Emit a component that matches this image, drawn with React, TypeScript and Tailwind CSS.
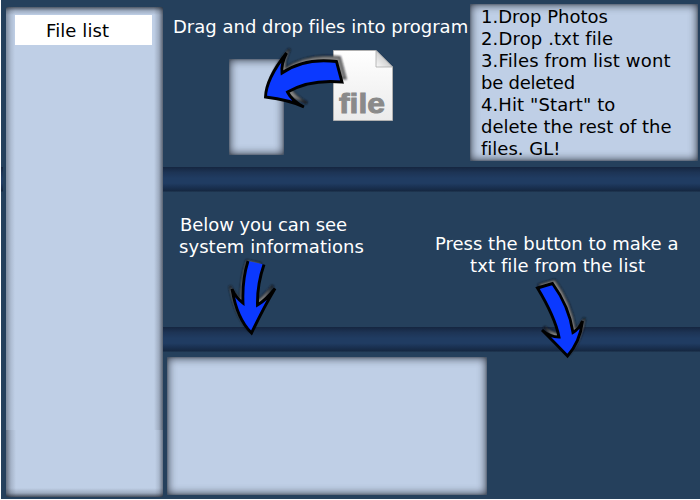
import type { ReactNode } from "react";

function Panel({ className, children }: { className: string; children?: ReactNode }) {
  return (
    <div
      className={`shrink-0 rounded-[2px] bg-[#bfcfe6] shadow-[inset_0_0_9px_1px_rgba(10,15,25,0.75),inset_0_0_2px_rgba(10,15,25,0.5)] ${className}`}
    >
      {children}
    </div>
  );
}

function Band({ className = "" }: { className?: string }) {
  return (
    <div
      className={`h-[25px] shrink-0 bg-[linear-gradient(to_bottom,#152640_0%,#1d3455_22%,#203c62_45%,#203c62_65%,#1a3152_80%,#152842_95%,#233b55_100%)] ${className}`}
    />
  );
}

type ArrowProps = { d: string; outline?: string; shadow?: string; dx: number; dy: number };

function Arrow({ d, outline = d, shadow = d, dx, dy }: ArrowProps) {
  return (
    <g strokeLinejoin="miter" strokeMiterlimit="5">
      <g transform={`translate(${dx} ${dy})`} filter="url(#soft)">
        <path d={shadow} fill="#6b6b6b" stroke="#0a0d12" strokeWidth="2.6" />
        <path d={shadow} fill="#858585" />
      </g>
      <path d={d} fill="#0b39ff" />
      <path d={outline} fill="none" stroke="#000" strokeWidth="2.9" />
    </g>
  );
}

export default function App() {
  return (
    <div
      className="relative h-[500px] w-[700px] overflow-hidden bg-white pb-px pl-px text-[18px] leading-[22px] whitespace-nowrap [font-variant-ligatures:none]"
      style={{ fontFamily: '"DejaVu Sans", Verdana, sans-serif' }}
    >
      <div className="flex h-full bg-[#25405c]">
        <div className="flex w-[2px] shrink-0 flex-col pt-[167px]">
          <Band />
        </div>
        <div className="w-[160px] shrink-0 pt-[7px] pl-[3px]">
          <div className="h-[423px] w-[157px] rounded-t-[2px] bg-[#bfcfe6] bg-[linear-gradient(to_right,rgba(20,25,35,0.35),rgba(20,25,35,0.1)_5px,transparent_9px),linear-gradient(to_left,rgba(20,25,35,0.6),rgba(20,25,35,0.2)_4px,transparent_9px),linear-gradient(to_bottom,rgba(20,25,35,0.65),rgba(20,25,35,0.18)_4px,transparent_8px)] pt-[8px] pl-[9px]">
            <div className="h-[30px] w-[137px] bg-white pt-[5px] pl-[31px] text-black">
              <span className="tracking-[0.1px]">File list</span>
            </div>
          </div>
          <div className="h-[67px] w-[157px] rounded-b-[2px] bg-[#bfcfe6] bg-[linear-gradient(to_right,rgba(20,25,35,0.5),rgba(20,25,35,0.15)_5px,transparent_10px),linear-gradient(to_left,rgba(20,25,35,0.5),rgba(20,25,35,0.12)_4px,transparent_8px),linear-gradient(to_top,rgba(20,25,35,0.7),rgba(20,25,35,0.2)_4px,transparent_9px)]" />
        </div>
        <div className="flex flex-1 flex-col">
          <div className="flex h-[167px] shrink-0">
            <div className="w-[307px] shrink-0 pt-[16px] pl-[10px] text-white">
              <div>Drag and drop files into program</div>
              <div className="flex pt-[12px] pl-[56px]">
                <Panel className="mt-[9px] h-[96px] w-[55px]" />
                <svg className="ml-[49px] h-[71px] w-[60px]" viewBox="0 0 60 71">
                  <defs>
                    <linearGradient id="paper" x1="0" y1="0" x2="0" y2="1">
                      <stop offset="0" stopColor="#fff" />
                      <stop offset="1" stopColor="#ebebeb" />
                    </linearGradient>
                    <linearGradient id="fold" x1="0" y1="1" x2="1" y2="0">
                      <stop offset="0" stopColor="#fafafa" />
                      <stop offset="1" stopColor="#aaa" />
                    </linearGradient>
                  </defs>
                  <path d="M.5.5H43L59.500 17V70.500H.5Z" fill="url(#paper)" stroke="#b1b1b1" />
                  <path d="M43 .5V17H59.500Z" fill="url(#fold)" stroke="#aaa" strokeWidth=".8" />
                  <text
                    x="6"
                    y="62.500"
                    textLength="46"
                    lengthAdjust="spacingAndGlyphs"
                    fontFamily="Liberation Sans, Arial, sans-serif"
                    fontWeight="700"
                    fontSize="27"
                    fill="#8a8a8a"
                    stroke="#8a8a8a"
                    strokeWidth=".9"
                  >
                    file
                  </text>
                </svg>
              </div>
            </div>
            <Panel className="mt-[4px] h-[157px] w-[228px] pt-[2px] pl-[11px] text-black">
              <div>1.Drop Photos</div>
              <div className="tracking-[0.15px]">2.Drop .txt file</div>
              <div className="tracking-[0.15px]">3.Files from list wont</div>
              <div className="tracking-[-0.25px]">be deleted</div>
              <div className="tracking-[0.1px]">4.Hit "Start" to</div>
              <div>delete the rest of the</div>
              <div>files. GL!</div>
            </Panel>
          </div>
          <Band />
          <div className="flex h-[135px] shrink-0 text-white">
            <div className="w-[272px] pt-[22px] pl-[16px]">
              <div className="pl-[1px] tracking-[-0.07px]">Below you can see</div>
              <div className="tracking-[0.05px]">system informations</div>
            </div>
            <div className="pt-[41px]">
              <div>Press the button to make a</div>
              <div className="pl-[35px] tracking-[0.1px]">txt file from the list</div>
            </div>
          </div>
          <Band />
          <Panel className="mt-[5px] ml-[4px] h-[138px] w-[320px]" />
        </div>
      </div>
      <svg className="pointer-events-none absolute inset-0 h-[500px] w-[700px]" viewBox="0 0 700 500">
        <defs>
          <filter id="soft" x="-30%" y="-30%" width="160%" height="160%">
            <feGaussianBlur stdDeviation="1.3" />
          </filter>
        </defs>
        <Arrow
          d="M265.500 97Q266 79 286.500 53Q281 64 282 73Q304 57.500 336.500 61.500L342 82Q310 79 287.500 92Q292 101 304 107Q290 100 265.500 97Z"
          dx={3}
          dy={-4}
        />
        <Arrow
          d="M248 261L264 264.500Q257 285 257.500 305Q266 300 275 288.500Q264 307 251.500 333Q237 319 232 289Q236 298 243 303Q242 280 248 261Z"
          outline="M264 264.500Q257 285 257.500 305Q266 300 275 288.500Q264 307 251.500 333Q237 319 232 289Q236 298 243 303Q242 280 248 261"
          shadow="M249 264L262 267Q257 285 257.500 305Q266 300 275 288.500Q261 309 251.500 333Q237 318 232 289Q236 298 243 303Q243 282 249 264Z"
          dx={-2}
          dy={-3}
        />
        <Arrow
          d="M537.500 288L552.500 283.500Q569 306 573 332.500Q579 329 582.500 321Q580 342 567.500 356Q555 343 542 330Q550 337 559 337Q555 317 537.500 288Z"
          dx={2}
          dy={-3}
        />
      </svg>
    </div>
  );
}
